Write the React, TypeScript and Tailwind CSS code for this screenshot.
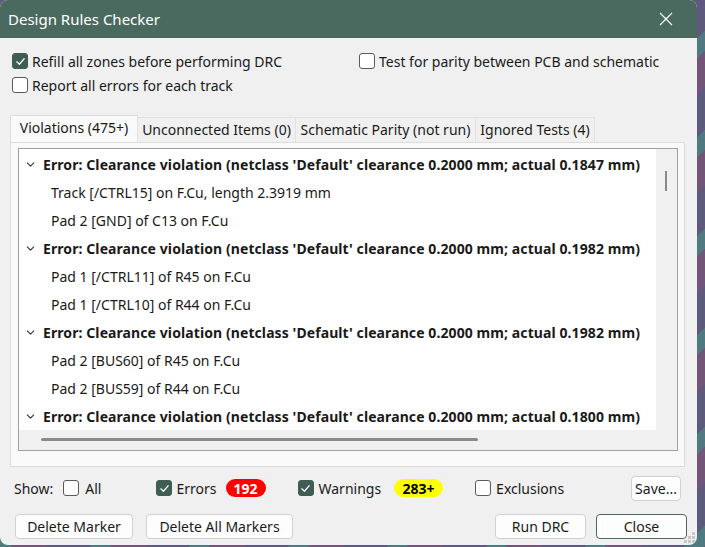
import { ChevronDown } from "lucide-react";

const FONT = "font-['Segoe_UI','Noto_Sans',sans-serif]";

function Check({ checked = false }: { checked?: boolean }) {
  return (
    <span
      className={`w-4 h-4 shrink-0 rounded-[3px] border flex items-center justify-center ${
        checked ? "bg-[#3f5d53] border-[#3f5d53]" : "bg-white border-[#5a5a5a]"
      }`}
    >
      {checked && (
        <svg width="11" height="11" viewBox="0 0 12 12" fill="none">
          <path d="M2 6.3 L4.8 9 L10 3" stroke="white" strokeWidth="1.3" strokeLinecap="round" strokeLinejoin="round" />
        </svg>
      )}
    </span>
  );
}

function Btn({ label, className = "" }: { label: string; className?: string }) {
  return (
    <div className={`h-[25px] flex items-center justify-center rounded-[4px] border bg-[#fdfdfd] text-[14px] text-[#1a1a1a] ${className}`}>
      {label}
    </div>
  );
}

const ERRORS = [
  { actual: "0.1847", items: ["Track [/CTRL15] on F.Cu, length 2.3919 mm", "Pad 2 [GND] of C13 on F.Cu"] },
  { actual: "0.1982", items: ["Pad 1 [/CTRL11] of R45 on F.Cu", "Pad 1 [/CTRL10] of R44 on F.Cu"] },
  { actual: "0.1982", items: ["Pad 2 [BUS60] of R45 on F.Cu", "Pad 2 [BUS59] of R44 on F.Cu"] },
  { actual: "0.1800", items: [] },
];

const TABS = [
  { label: "Violations (475+)", w: "w-[128px]" },
  { label: "Unconnected Items (0)", w: "w-[159px]" },
  { label: "Schematic Parity (not run)", w: "w-[181px]" },
  { label: "Ignored Tests (4)", w: "w-[120px]" },
];

export default function App() {
  return (
    <div className={`w-[705px] h-[547px] overflow-hidden bg-[#5d5a7c] ${FONT}`}>
      {/* desktop stripes peeking out on the right */}
      <div className="w-[705px] h-[547px] bg-[repeating-linear-gradient(135deg,#5e5a7e_0px,#5e5a7e_30px,#4f7b80_30px,#4f7b80_44px,#74557a_44px,#74557a_70px)]">
        <div className="w-[697px] h-[545px] rounded-[8px] overflow-hidden bg-[#f0f0f0] flex flex-col relative">
          {/* title bar */}
          <div className="h-[38px] bg-[#4a6a5f] flex items-center justify-between pl-2 pr-[24px] shrink-0">
            <span className="text-white text-[15px]">Design Rules Checker</span>
            <svg width="14" height="14" viewBox="0 0 14 14">
              <path d="M1 1 L13 13 M13 1 L1 13" stroke="white" strokeWidth="1.1" />
            </svg>
          </div>

          {/* options */}
          <div className="pl-3 pt-[11px] text-[14px] text-[#1a1a1a] shrink-0">
            <div className="flex h-6 items-center">
              <label className="w-[347px] flex items-center gap-[4px]">
                <Check checked />
                Refill all zones before performing DRC
              </label>
              <label className="flex items-center gap-[4px]">
                <Check />
                Test for parity between PCB and schematic
              </label>
            </div>
            <div className="flex h-6 items-center gap-[4px]">
              <Check />
              Report all errors for each track
            </div>
          </div>

          {/* tabs */}
          <div className="mt-[18px] ml-[10px] flex items-end h-[27px] shrink-0 text-[14px] text-[#1a1a1a]">
            {TABS.map((t, i) => (
              <div
                key={t.label}
                className={`${t.w} flex items-center justify-center border border-b-0 ${
                  i === 0
                    ? "h-[27px] bg-[#f9f9f9] border-[#dcdcdc] pb-[3px]"
                    : "h-[25px] bg-[#f0f0f0] border-[#e2e2e2] -ml-px pb-[2px]"
                }`}
              >
                {t.label}
              </div>
            ))}
          </div>
          <div className="ml-[10px] w-[675px] h-[325px] shrink-0 border border-[#dcdcdc] bg-[#f9f9f9] pt-[5px] pl-[7px]">
            <div className="w-[660px] h-[303px] border border-[#a0a0a0] bg-[#f0f0f0] flex flex-col">
              <div className="flex h-[281px] shrink-0">
                <div className="w-[637px] bg-white pt-px overflow-hidden text-[14px] text-[#1a1a1a]">
                  {ERRORS.map((e, i) => (
                    <div key={i}>
                      <div className="h-[28px] flex items-center whitespace-nowrap">
                        <ChevronDown className="w-[13px] h-[13px] ml-[5px] mr-[6px] text-[#333]" strokeWidth={2} />
                        <span className="font-bold tracking-[0.09px]">
                          Error: Clearance violation (netclass 'Default' clearance 0.2000 mm; actual {e.actual} mm)
                        </span>
                      </div>
                      {e.items.map((it) => (
                        <div key={it} className="h-[28px] flex items-center pl-[32px] whitespace-nowrap">
                          {it}
                        </div>
                      ))}
                    </div>
                  ))}
                </div>
                <div className="flex-1 pt-[22px] flex justify-center">
                  <div className="w-[2px] h-[20px] bg-[#8a8a8a] ml-[-1px]" />
                </div>
              </div>
              <div className="flex-1 pl-[22px] pt-[8px]">
                <div className="w-[437px] h-[3px] rounded-full bg-[#8a8a8a]" />
              </div>
            </div>
          </div>

          {/* show row */}
          <div className="mt-[9px] h-[24px] shrink-0 flex items-center pl-[14px] text-[14px] text-[#1a1a1a]">
            <span>Show:</span>
            <span className="ml-[10px]"><Check /></span>
            <span className="ml-[6px]">All</span>
            <span className="ml-[55px]"><Check checked /></span>
            <span className="ml-[4px]">Errors</span>
            <span className="ml-[9px] w-[40px] h-[18px] rounded-full bg-[#ff0000] text-white font-bold flex items-center justify-center">192</span>
            <span className="ml-[32px]"><Check checked /></span>
            <span className="ml-[5px]">Warnings</span>
            <span className="ml-[13px] w-[49px] h-[18px] rounded-full bg-[#ffff00] text-black font-bold flex items-center justify-center">283+</span>
            <span className="ml-[32px]"><Check /></span>
            <span className="ml-[5px]">Exclusions</span>
            <Btn label="Save..." className="ml-auto mr-[16px] w-[50px] h-[24px] border-[#d0d0d0]" />
          </div>

          {/* buttons */}
          <div className="mt-[14px] shrink-0 flex items-center pl-[15px]">
            <Btn label="Delete Marker" className="w-[118px] border-[#d0d0d0]" />
            <Btn label="Delete All Markers" className="ml-[13px] w-[147px] border-[#d0d0d0]" />
            <Btn label="Run DRC" className="ml-auto w-[91px] border-[#d0d0d0]" />
            <Btn label="Close" className="ml-[10px] mr-[10px] w-[91px] border-[#4a6a5f]" />
          </div>

          {/* resize grip */}
          <svg className="absolute right-[2px] bottom-[2px]" width="11" height="11" viewBox="0 0 11 11">
            {[[8, 0], [8, 4], [4, 4], [8, 8], [4, 8], [0, 8]].map(([x, y], i) => (
              <rect key={i} x={x} y={y} width="3" height="3" fill="#c8c8c8" />
            ))}
          </svg>
        </div>
      </div>
    </div>
  );
}
